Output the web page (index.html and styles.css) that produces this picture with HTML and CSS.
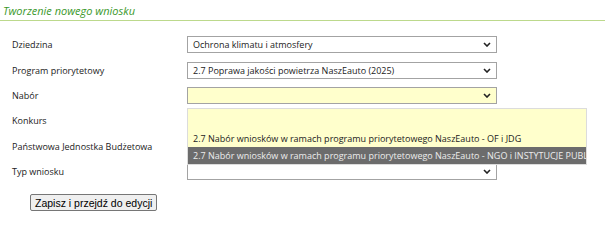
FILE: index.html
```html
<!DOCTYPE html>
<html lang="pl">
<head>
    <meta charset="UTF-8">
    <title>Tworzenie nowego wniosku</title>
    <link rel="stylesheet" href="styles.css">
</head>
<body>
    <div id="wniosekContainer">
        <h1 class="pageTitle">Tworzenie nowego wniosku</h1>

        <form id="wniosekForm" class="wniosekForm">
            <label class="fieldLabel">Dziedzina</label>
            <div class="selectBox">
                <span class="selectText">Ochrona klimatu i atmosfery</span>
                <svg class="chevron" width="8" height="5" viewBox="0 0 8 5"><path d="M1 1 L4 4 L7 1" fill="none" stroke="#222" stroke-width="1.6"/></svg>
            </div>

            <label class="fieldLabel">Program priorytetowy</label>
            <div class="selectBox">
                <span class="selectText">2.7 Poprawa jakości powietrza NaszEauto (2025)</span>
                <svg class="chevron" width="8" height="5" viewBox="0 0 8 5"><path d="M1 1 L4 4 L7 1" fill="none" stroke="#222" stroke-width="1.6"/></svg>
            </div>

            <label class="fieldLabel">Nabór</label>
            <div class="selectWrap">
                <div class="selectBox required">
                    <span class="selectText"></span>
                    <svg class="chevron" width="8" height="5" viewBox="0 0 8 5"><path d="M1 1 L4 4 L7 1" fill="none" stroke="#222" stroke-width="1.6"/></svg>
                </div>
                <ul class="dropdownList">
                    <li class="dropdownItem blank"></li>
                    <li class="dropdownItem">2.7 Nabór wniosków w ramach programu priorytetowego NaszEauto - OF i JDG</li>
                    <li class="dropdownItem active">2.7 Nabór wniosków w ramach programu priorytetowego NaszEauto - NGO i INSTYTUCJE PUBLICZNE</li>
                </ul>
            </div>

            <label class="fieldLabel">Konkurs</label>
            <div class="selectBox">
                <span class="selectText"></span>
            </div>

            <label class="fieldLabel">Państwowa Jednostka Budżetowa</label>
            <div class="selectBox">
                <span class="selectText"></span>
            </div>

            <label class="fieldLabel">Typ wniosku</label>
            <div class="selectBox">
                <span class="selectText"></span>
                <svg class="chevron" width="8" height="5" viewBox="0 0 8 5"><path d="M1 1 L4 4 L7 1" fill="none" stroke="#222" stroke-width="1.6"/></svg>
            </div>
        </form>

        <button type="button" class="saveBtn">Zapisz i przejdź do edycji</button>
    </div>
</body>
</html>
```

FILE: styles.css
```css
body {
    margin: 0;
    background-color: #fff;
    font-family: 'Open Sans', 'Noto Sans', sans-serif;
    font-size: 9px;
    color: #222;
}

#wniosekContainer {
    padding-top: 3px;
}

.pageTitle {
    margin: 0;
    padding: 0 0 2px 3px;
    font-size: 11px;
    font-weight: normal;
    font-style: italic;
    color: #3a982a;
    border-bottom: 1px solid #bcd98c;
}

.wniosekForm {
    display: grid;
    grid-template-columns: 175px 310px;
    grid-auto-rows: 25.4px;
    align-items: center;
    padding: 11px 0 0 12px;
    margin: 0;
}

.fieldLabel {
    color: #222;
}

.selectBox {
    display: flex;
    align-items: center;
    justify-content: space-between;
    height: 17px;
    box-sizing: border-box;
    padding: 0 5px 0 5px;
    border: 1px solid #a3a3a3;
    background-color: #fff;
}

.selectBox.required {
    background-color: #ffffcc;
}

.chevron {
    flex-shrink: 0;
}

.selectWrap {
    position: relative;
}

.dropdownList {
    position: absolute;
    top: 21px;
    left: 0;
    z-index: 2;
    width: 400px;
    height: 57px;
    margin: 0;
    padding: 0;
    list-style: none;
    box-sizing: border-box;
    overflow: hidden;
    background-color: #ffffcc;
    border: 1px solid #dcdcdc;
}

.dropdownItem {
    height: 17px;
    line-height: 17px;
    padding-left: 5px;
    white-space: nowrap;
    overflow: hidden;
}

.dropdownItem.blank {
    height: 21px;
}

.dropdownItem.active {
    background-color: #6c6c6c;
    color: #ececec;
}

.saveBtn {
    margin: 10px 0 0 30px;
    height: 17px;
    padding: 0 4px;
    font-family: 'Liberation Sans', Arial, sans-serif;
    font-size: 10.5px;
    color: #000;
    background-color: #efefef;
    border: 1px solid #767676;
    border-radius: 2px;
}
```
